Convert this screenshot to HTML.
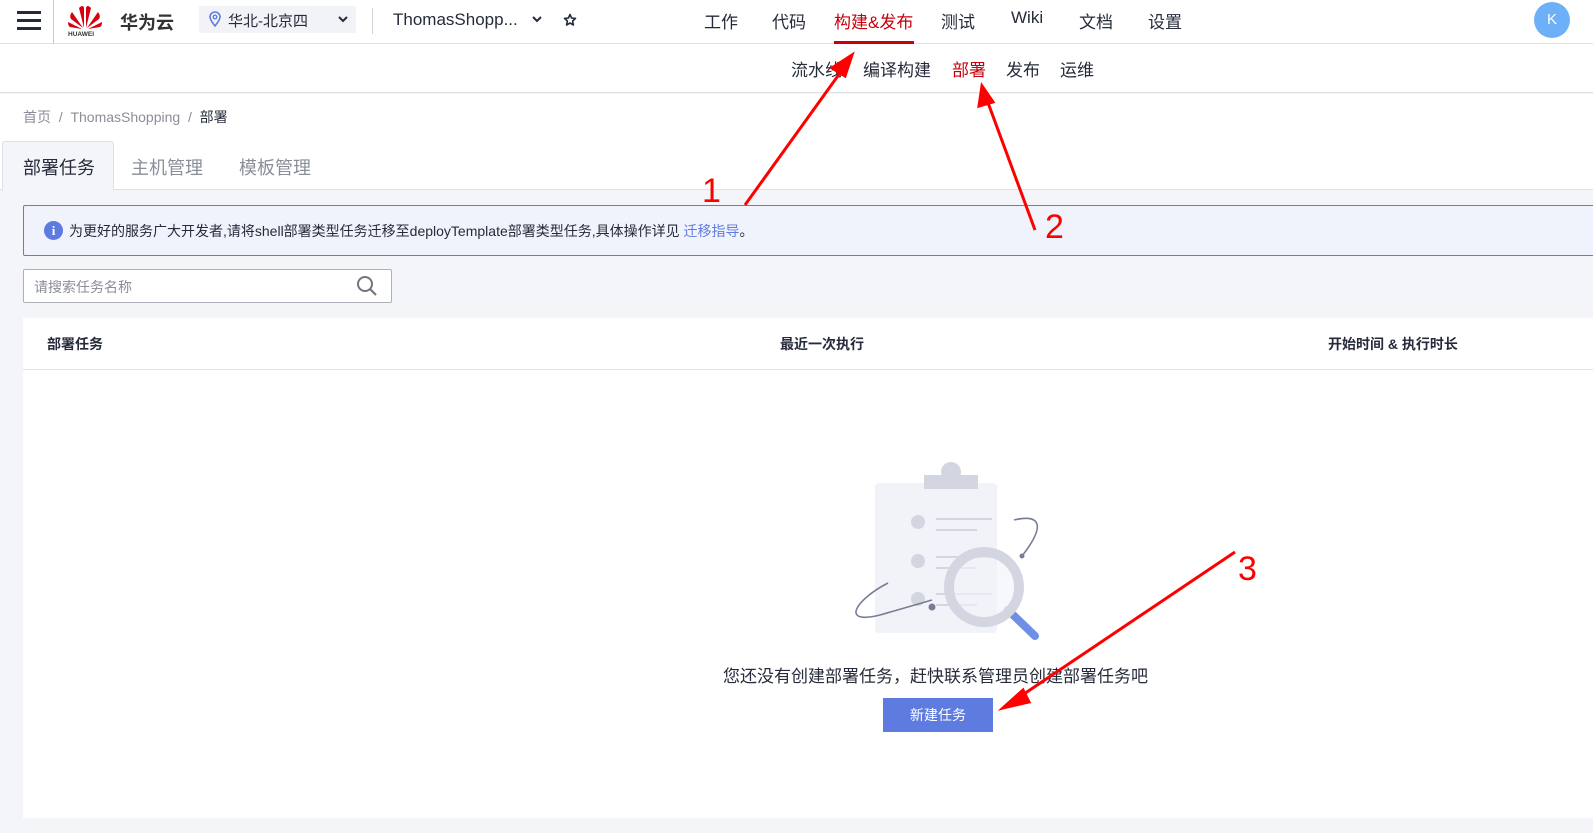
<!DOCTYPE html>
<html><head><meta charset="utf-8"><style>
*{margin:0;padding:0;box-sizing:border-box}
body{width:1593px;height:833px;overflow:hidden;font-family:"Liberation Sans","Noto Sans CJK SC",sans-serif;background:#f3f5f9;position:relative;color:#252b3a}
.abs{position:absolute}
#top{left:0;top:0;width:1593px;height:44px;background:#fff;border-bottom:1px solid #dfe1e6}
#sub{left:0;top:44px;width:1593px;height:49px;background:#fff;border-bottom:1px solid #dfe1e6}
.nav{font-size:17px;color:#252b3a;top:8px}
.sn{font-size:17px;top:56px}
</style></head><body>
<div id="top" class="abs"></div>
<div id="sub" class="abs"></div>
<div class="abs" style="left:17px;top:11px;width:24px;height:3px;background:#252b3a"></div>
<div class="abs" style="left:17px;top:19px;width:24px;height:3px;background:#252b3a"></div>
<div class="abs" style="left:17px;top:27px;width:24px;height:3px;background:#252b3a"></div>
<div class="abs" style="left:53px;top:0;width:1px;height:44px;background:#c8cad0"></div>
<svg class="abs" style="left:66px;top:2px" width="38" height="36" viewBox="0 0 38 36">
<g fill="#d7000f"><path d="M18 26 L13 6 Q17 2 18 6Z"/><path d="M20 26 L25 6 Q21 2 20 6Z"/><path d="M17 26 L6 10 Q3 14 5 17Z"/><path d="M21 26 L32 10 Q35 14 33 17Z"/><path d="M16 27 L2 20 Q2 24 4 25Z"/><path d="M22 27 L36 20 Q36 24 34 25Z"/></g>
<text x="2" y="34" font-size="6.5" font-weight="bold" fill="#333" font-family="Liberation Sans">HUAWEI</text></svg>
<div class="abs" style="left:120px;top:9px;font-size:18px;font-weight:bold;color:#333">华为云</div>
<div class="abs" style="left:199px;top:6px;width:157px;height:27px;background:#f1f3f6"></div>
<svg class="abs" style="left:208px;top:11px" width="14" height="16" viewBox="0 0 14 16"><path d="M7 15 C3 10 2 8 2 6 A5 5 0 0 1 12 6 C12 8 11 10 7 15Z" fill="none" stroke="#5e7ce0" stroke-width="1.6"/><circle cx="7" cy="6" r="1.8" fill="none" stroke="#5e7ce0" stroke-width="1.4"/></svg>
<div class="abs" style="left:228px;top:10px;font-size:15px">华北-北京四</div>
<svg class="abs" style="left:338px;top:15px" width="10" height="8" viewBox="0 0 10 8"><path d="M1 2 L5 6 L9 2" fill="none" stroke="#252b3a" stroke-width="2"/></svg>
<div class="abs" style="left:372px;top:8px;width:1px;height:26px;background:#d0d2d8"></div>
<div class="abs" style="left:393px;top:10px;font-size:17px">ThomasShopp...</div>
<svg class="abs" style="left:532px;top:15px" width="10" height="8" viewBox="0 0 10 8"><path d="M1 2 L5 6 L9 2" fill="none" stroke="#252b3a" stroke-width="2"/></svg>
<svg class="abs" style="left:563px;top:13px" width="14" height="14" viewBox="0 0 14 14"><path d="M7 1.5 L8.6 5 L12.5 5.4 L9.6 8 L10.4 12 L7 10 L3.6 12 L4.4 8 L1.5 5.4 L5.4 5Z" fill="none" stroke="#252b3a" stroke-width="1.6" stroke-linejoin="round"/></svg>
<div class="abs nav" style="left:704px">工作</div>
<div class="abs nav" style="left:772px">代码</div>
<div class="abs nav" style="left:834px;color:#c7000b">构建&amp;发布</div>
<div class="abs" style="left:834px;top:41px;width:80px;height:3px;background:#c7000b"></div>
<div class="abs nav" style="left:941px">测试</div>
<div class="abs nav" style="left:1011px">Wiki</div>
<div class="abs nav" style="left:1079px">文档</div>
<div class="abs nav" style="left:1148px">设置</div>
<div class="abs" style="left:1534px;top:2px;width:36px;height:36px;border-radius:50%;background:#6cb0f7;color:#fff;font-size:15px;text-align:center;line-height:36px">K</div>
<div class="abs sn" style="left:791px">流水线</div>
<div class="abs sn" style="left:863px">编译构建</div>
<div class="abs sn" style="left:952px;color:#c7000b">部署</div>
<div class="abs sn" style="left:1006px">发布</div>
<div class="abs sn" style="left:1060px">运维</div>
<div class="abs" style="left:0;top:94px;width:1593px;height:96px;background:#fff;border-bottom:1px solid #dfe1e6"></div>
<div class="abs" style="left:23px;top:107px;font-size:14px;color:#8a8e99">首页 &nbsp;/&nbsp; ThomasShopping &nbsp;/&nbsp; <span style="color:#252b3a">部署</span></div>
<div class="abs" style="left:2px;top:141px;width:112px;height:50px;background:#f3f5f9;border:1px solid #dfe1e6;border-bottom:none;border-radius:3px 3px 0 0"></div>
<div class="abs" style="left:23px;top:154px;font-size:18px;color:#252b3a">部署任务</div>
<div class="abs" style="left:131px;top:154px;font-size:18px;color:#8a8e99">主机管理</div>
<div class="abs" style="left:239px;top:154px;font-size:18px;color:#8a8e99">模板管理</div>
<div class="abs" style="left:23px;top:205px;width:1580px;height:51px;background:#f0f3fb;border:1px solid #5e7ce0;border-radius:2px"></div>
<div class="abs" style="left:44px;top:221px;width:19px;height:19px;border-radius:50%;background:#5e7ce0;color:#fff;font-size:13px;font-weight:bold;text-align:center;line-height:19px;font-family:'Liberation Serif',serif">i</div>
<div class="abs" style="left:69px;top:221px;font-size:14px;color:#252b3a">为更好的服务广大开发者,请将shell部署类型任务迁移至deployTemplate部署类型任务,具体操作详见 <span style="color:#5e7ce0">迁移指导</span>。</div>
<div class="abs" style="left:23px;top:269px;width:369px;height:34px;background:#fff;border:1px solid #adb0b8;border-radius:2px"></div>
<div class="abs" style="left:34px;top:277px;font-size:14px;color:#8a8e99">请搜索任务名称</div>
<svg class="abs" style="left:356px;top:275px" width="22" height="22" viewBox="0 0 22 22"><circle cx="9" cy="9" r="7" fill="none" stroke="#71757f" stroke-width="2"/><path d="M14 14 L20 20" stroke="#71757f" stroke-width="2.2"/></svg>
<div class="abs" style="left:23px;top:318px;width:1580px;height:500px;background:#fff"></div>
<div class="abs" style="left:23px;top:369px;width:1580px;height:1px;background:#dfe1e6"></div>
<div class="abs" style="left:47px;top:334px;font-size:14px;font-weight:bold">部署任务</div>
<div class="abs" style="left:780px;top:334px;font-size:14px;font-weight:bold">最近一次执行</div>
<div class="abs" style="left:1328px;top:334px;font-size:14px;font-weight:bold">开始时间 &amp; 执行时长</div>
<svg class="abs" style="left:820px;top:440px" width="240" height="200" viewBox="0 0 240 200">
<rect x="55" y="43" width="122" height="150" rx="4" fill="#f1f3f8"/>
<circle cx="131" cy="32" r="10" fill="#d3d6e0"/><rect x="104" y="35" width="54" height="14" fill="#d3d6e0"/>
<g fill="#d3d6e0"><circle cx="98" cy="82" r="7"/><circle cx="98" cy="121" r="7"/><circle cx="98" cy="159" r="7"/></g>
<g stroke="#d3d6e0" stroke-width="2"><path d="M116 79h56M116 90h41M116 117h56M116 128h41M116 154h56M116 165h41"/></g>
<path d="M68 143 C35 160 20 185 60 175 L112 160" fill="none" stroke="#777d95" stroke-width="1.6"/>
<path d="M194 80 C215 75 230 80 202 116" fill="none" stroke="#777d95" stroke-width="1.6"/>
<circle cx="112" cy="167" r="3.5" fill="#777d95"/><circle cx="202" cy="116" r="2.5" fill="#777d95"/>
<path d="M188 170 L215 196" stroke="#6f8fe6" stroke-width="8" stroke-linecap="round"/>
<circle cx="164" cy="147" r="35" fill="#f1f3f8" fill-opacity=".6" stroke="#d3d6e0" stroke-width="10"/>
</svg>
<div class="abs" style="left:723px;top:662px;font-size:17px;color:#252b3a">您还没有创建部署任务，赶快联系管理员创建部署任务吧</div>
<div class="abs" style="left:883px;top:698px;width:110px;height:34px;background:#5e7ce0;color:#fff;font-size:14px;text-align:center;line-height:34px">新建任务</div>
<svg class="abs" style="left:0;top:0" width="1593" height="833">
<g stroke="#f00" stroke-width="3" fill="#f00">
<line x1="745" y1="205" x2="845" y2="66"/><path d="M852 55 L832 68 L845 76Z"/>
<line x1="1035" y1="230" x2="987" y2="100"/><path d="M982 86 L979 106 L993 102Z"/>
<line x1="1235" y1="552" x2="1015" y2="700"/><path d="M1003 708 L1023 690 L1029 702Z"/>
</g>
<g fill="#f00" font-family="Liberation Sans" font-size="34"><text x="702" y="202">1</text><text x="1045" y="238">2</text><text x="1238" y="580">3</text></g>
</svg>
</body></html>
